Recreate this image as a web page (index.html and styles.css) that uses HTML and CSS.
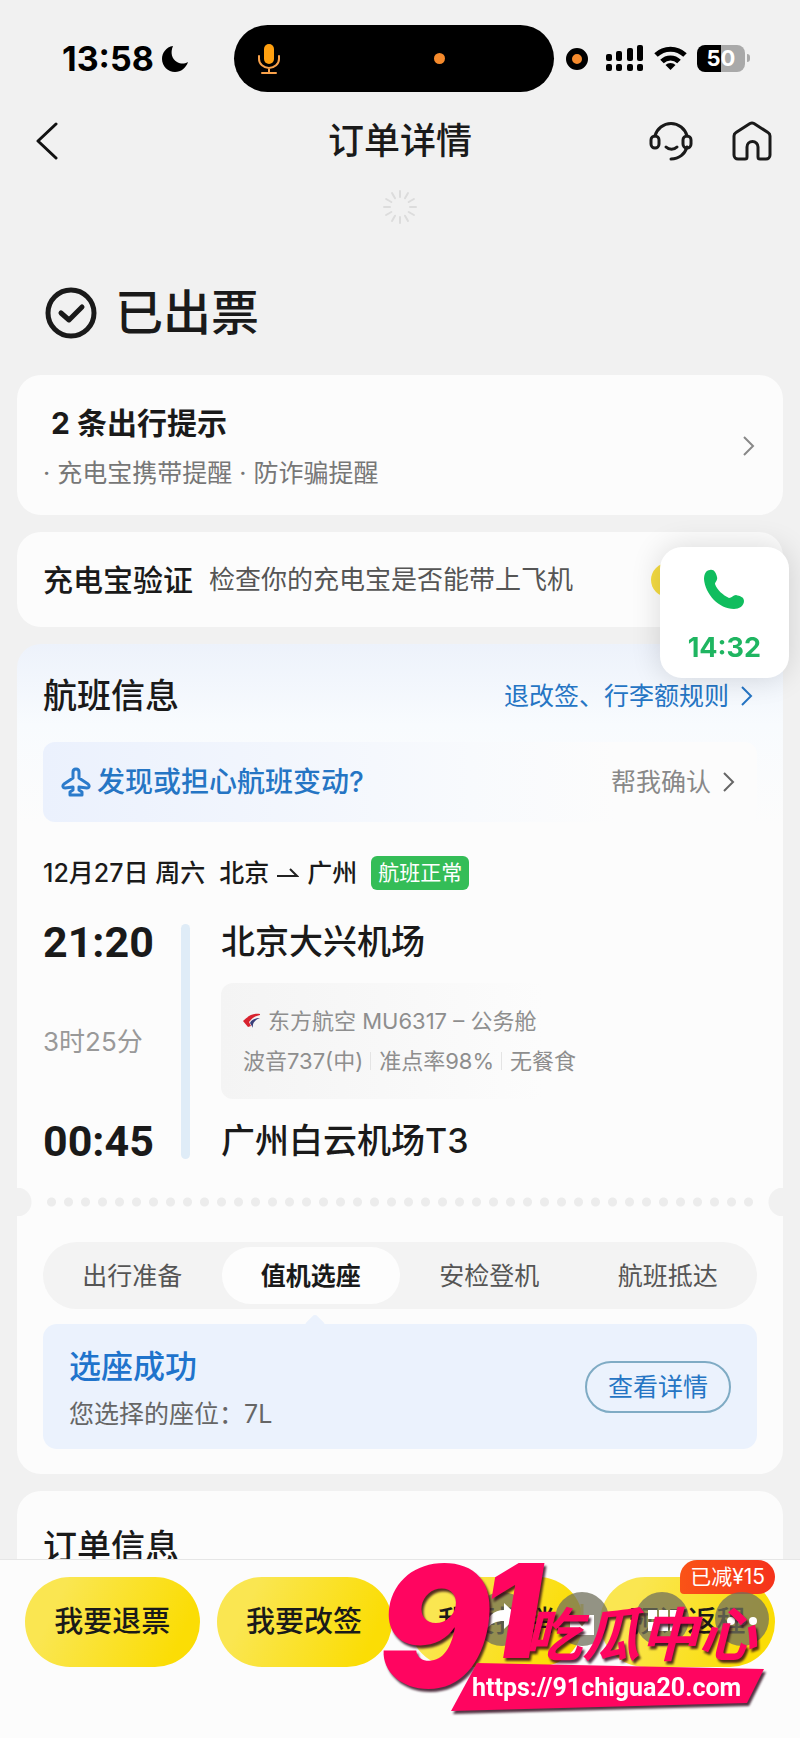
FILE: index.html
```
<!doctype html>
<html lang="zh-cn">
<head>
    <meta charset="UTF-8">
    <meta name="viewport" content="width=device-width, initial-scale=1.0">
    <title>订单详情</title>
    <link rel="stylesheet" href="styles.css">
</head>
<body>
    <!-- 状态栏 -->
    <div class="status_bar">
        <div class="status_time">
            13:58
            <svg width="26" height="26" viewBox="0 0 26 26"><path d="M11 0C8 7 10 13 15 16c4 2 7 2 11 0-2 6-7 10-13 10C6 26 0 20 0 13 0 7 4 1 11 0z"/></svg>
        </div>
        <div class="island">
            <svg width="22" height="32" viewBox="0 0 22 32" fill="none" stroke="#f9a24b" stroke-width="2" stroke-linecap="round">
                <rect x="6" y="1" width="10" height="20" rx="5" fill="#ffa010" stroke="none"/>
                <path d="M1 13v3a10 9 0 0 0 20 0v-3M11 25v5M4 30h14"/>
            </svg>
            <i class="dot"></i>
        </div>
        <div class="status_icons">
            <i class="rec"></i>
            <svg width="38" height="27" viewBox="0 0 38 27">
                <rect x="0" y="9" width="6" height="7" rx="2"/><rect x="10" y="6" width="6" height="10" rx="2"/>
                <rect x="21" y="3" width="6" height="13" rx="2"/><rect x="31" y="0" width="6" height="16" rx="2"/>
                <rect x="0" y="19" width="6" height="7" rx="2"/><rect x="10" y="19" width="6" height="7" rx="2"/>
                <rect x="21" y="19" width="6" height="7" rx="2"/><rect x="31" y="19" width="6" height="7" rx="2"/>
            </svg>
            <svg width="33" height="25" viewBox="0 0 33 25" fill="none" stroke="#000" stroke-width="5">
                <path d="M2 9a21 21 0 0 1 29 0M8 15.500a12 12 0 0 1 17 0"/>
                <path d="M16.500 24l-5-5a7 7 0 0 1 10 0z" fill="#000" stroke="none"/>
            </svg>
            <span class="battery">50</span>
        </div>
    </div>

    <!-- 导航 -->
    <div class="nav">
        <button type="button" class="back" aria-label="返回">
            <svg width="24" height="38" viewBox="0 0 24 38" fill="none" stroke="#111" stroke-width="3" stroke-linecap="round" stroke-linejoin="round"><path d="M21 2L3 19l18 17"/></svg>
        </button>
        <h1>订单详情</h1>
        <div class="nav_right">
            <button type="button" aria-label="客服">
                <svg width="44" height="40" viewBox="0 0 44 40" fill="none" stroke="#1a1a1a" stroke-width="3" stroke-linecap="round">
                    <path d="M6 15a16.500 16.500 0 0 1 32 0M38 26c-2 7-8 12-16 12"/>
                    <rect x="2" y="15" width="8" height="12" rx="4"/>
                    <rect x="34" y="15" width="8" height="12" rx="4"/>
                    <path d="M17 26c3 3 8 3 11 0"/>
                </svg>
            </button>
            <button type="button" aria-label="首页">
                <svg width="40" height="40" viewBox="0 0 40 40" fill="none" stroke="#1a1a1a" stroke-width="3" stroke-linejoin="round">
                    <path d="M18 2.500a4 4 0 0 1 4 0l14 9a4 4 0 0 1 2 3.500V34a4 4 0 0 1-4 4h-6a2 2 0 0 1-2-2V26a5 5 0 0 0-11 0v10a2 2 0 0 1-2 2H6a4 4 0 0 1-4-4V15a4 4 0 0 1 2-3.500z"/>
                </svg>
            </button>
        </div>
    </div>
    <svg class="loading" width="34" height="34" viewBox="-17 -17 34 34" stroke="#dcdcdc" stroke-width="2" stroke-linecap="round">
        <path d="M0-10v-6M5-8.700l3-5.200M8.700-5l5.200-3M10 0h6M8.700 5l5.200 3M5 8.700l3 5.200M0 10v6M-5 8.700l-3 5.200M-8.700 5l-5.200 3M-10 0h-6M-8.700-5l-5.200-3M-5-8.700l-3-5.200"/>
    </svg>

    <div class="order_status">
        <svg width="52" height="52" viewBox="0 0 52 52" fill="none" stroke="#1a1a1a" stroke-width="5" stroke-linecap="round" stroke-linejoin="round"><circle cx="26" cy="26" r="23"/><path d="M16 26l8 7 13-13"/></svg>
        <h2>已出票</h2>
    </div>

    <div class="card tips">
        <div>
            <h3>2 条出行提示</h3>
            <p>· 充电宝携带提醒 · 防诈骗提醒</p>
        </div>
        <svg width="13" height="22" viewBox="0 0 13 22" fill="none" stroke="#888" stroke-width="2"><path d="M2 2l9 9-9 9"/></svg>
    </div>

    <div class="card verify">
        <h3>充电宝验证</h3>
        <p>检查你的充电宝是否能带上飞机</p>
        <button type="button" aria-label="去验证"></button>
    </div>

    <!-- 航班信息 -->
    <div class="card flight">
        <div class="flight_head">
            <h3>航班信息</h3>
            <a href="#">退改签、行李额规则
                <svg width="13" height="22" viewBox="0 0 13 22" fill="none" stroke="#2575c4" stroke-width="2"><path d="M2 2l9 9-9 9"/></svg>
            </a>
        </div>
        <div class="change">
            <svg width="30" height="30" viewBox="0 0 30 30" fill="none" stroke="#2b7bcb" stroke-width="3" stroke-linejoin="round"><path d="M12 5c0-4 6-4 6 0v6l9 6c2 2 1 4-1 4l-8-1v3l3 2v3H9v-3l3-2v-3l-8 1c-2 0-3-2-1-4l9-6z"/></svg>
            <strong>发现或担心航班变动?</strong>
            <a href="#">帮我确认
                <svg width="13" height="22" viewBox="0 0 13 22" fill="none" stroke="#666" stroke-width="2"><path d="M2 2l9 9-9 9"/></svg>
            </a>
        </div>
        <div class="date">
            <span>12月27日 周六</span>
            <span class="city">北京
                <svg width="22" height="10" viewBox="0 0 22 10" fill="none" stroke="#222" stroke-width="2"><path d="M0 8h20l-7-7"/></svg>
                广州</span>
            <em>航班正常</em>
        </div>
        <div class="route">
            <div class="times">
                <b>21:20</b>
                <span>3时25分</span>
                <b>00:45</b>
            </div>
            <div class="line"></div>
            <div class="places">
                <h4>北京大兴机场</h4>
                <div class="plane_info">
                    <p>
                        <svg width="18" height="16" viewBox="0 0 18 16"><path d="M17 1C10 0 5 3 0 8l5 6 3-1-2-4c3-4 6-6 11-7z" fill="#d8232f"/><path d="M17 5c-5 0-9 2-10 5l3 5c-1-5 2-8 7-10z" fill="#3a3f7a"/></svg>
                        东方航空 MU6317 – 公务舱
                    </p>
                    <p><span>波音737(中)</span><span>准点率98%</span><span>无餐食</span></p>
                </div>
                <h4>广州白云机场T3</h4>
            </div>
        </div>
        <div class="cut"></div>
        <div class="tabs">
            <button type="button">出行准备</button>
            <button type="button" class="active">值机选座</button>
            <button type="button">安检登机</button>
            <button type="button">航班抵达</button>
        </div>
        <div class="seat">
            <div>
                <h3>选座成功</h3>
                <p>您选择的座位：7L</p>
            </div>
            <button type="button">查看详情</button>
        </div>
    </div>

    <div class="card order">
        <h3>订单信息</h3>
    </div>

    <!-- 通话浮窗 -->
    <div class="call">
        <svg width="42" height="42" viewBox="0 0 42 42"><path d="M7 1c4-1 6 3 7 7 1 3-2 5-2 7 2 6 8 11 14 14 3 0 4-3 7-3 4 1 8 2 8 6 0 5-5 8-10 8C16 40 2 25 1 10 1 5 3 1 7 1z" fill="#10bd5e"/></svg>
        <span>14:32</span>
    </div>

    <!-- 底部操作 -->
    <div class="footer">
        <div class="btns">
            <button type="button">我要退票</button>
            <button type="button">我要改签</button>
            <button type="button">我要报销</button>
            <button type="button">预订返程</button>
        </div>
        <span class="sale">已减¥15</span>
        <div class="tools">
            <i><svg width="54" height="54" viewBox="0 0 54 54" fill="#fff"><path d="M11 38c0-14 8-20 18-20v-7l14 13-14 13v-8c-8 0-13 2-18 9z"/></svg></i>
            <i><svg width="54" height="54" viewBox="0 0 54 54"><path d="M15 23h24v20H15z" fill="#fff"/><path d="M27 12v18M21 25l6 7 6-7" fill="none" stroke="#8f8b5d" stroke-width="3"/></svg></i>
            <i><svg width="54" height="54" viewBox="0 0 54 54" fill="#fff"><path d="M13 18h9v9h-9zM24 18h9v9h-9zM35 18h9v9h-9zM13 30h9v9h-9zM24 30h9v9h-9zM35 30h9v9h-9z"/></svg></i>
            <i><svg width="54" height="54" viewBox="0 0 54 54" fill="#fff"><circle cx="16" cy="29" r="4"/><circle cx="27" cy="29" r="4"/><circle cx="38" cy="29" r="4"/></svg></i>
        </div>
        <svg class="mark" width="390" height="160" viewBox="0 0 390 160">
            <path d="M99 103l287 6-17 34-296 8z"/>
            <text class="mark_nine" x="0" y="127">9</text>
            <text class="mark_one" x="104" y="98">1</text>
            <text class="mark_name" x="146" y="96">吃瓜中心</text>
            <text class="mark_url" x="94" y="136">https://91chigua20.com</text>
        </svg>
    </div>
</body>
</html>
```
FILE: styles.css
```
*{
    padding:0;
    margin:0;
    box-sizing: border-box;
}
body{
    min-height: 100vh;
    background: #f1f1f1;
    color: #1a1a1a;
    font-family: Inter, "Noto Sans CJK SC", sans-serif;
    font-size: 25px;
    line-height: 36px;
}
svg{
    flex: none;
}
em,i{
    font-style: normal;
}
a{
    color: inherit;
    text-decoration: none;
}
button{
    border:0;
    background: none;
    font: inherit;
    color: inherit;
    white-space: nowrap;
    cursor: pointer;
}
h1,h2,h3,h4{
    font-weight: 500;
}

/* 状态栏 */
.status_bar{
    display: grid;
    grid-template-columns: 1fr 320px 1fr;
    align-items: center;
    padding: 25px 12px 0 0;
    color: #000;
}
.status_time{
    display: flex;
    align-items: center;
    gap: 8px;
    padding-left: 62px;
    font-size: 34px;
    font-weight: 700;
}
.island{
    display: flex;
    align-items: center;
    justify-content: space-between;
    height: 67px;
    padding: 0 109px 0 24px;
    border-radius: 34px;
    background: #000;
}
.dot{
    width: 11px;
    height: 11px;
    border-radius: 50%;
    background: #f58a2c;
}
.status_icons{
    display: flex;
    align-items: center;
    gap: 10px;
    padding-left: 12px;
}
.rec{
    width: 22px;
    height: 22px;
    margin-right: 8px;
    border: 6px solid #000;
    border-radius: 50%;
    background: #f58a2c;
}
.battery{
    position: relative;
    width: 48px;
    height: 27px;
    border-radius: 8px;
    background: linear-gradient(90deg, #000 50%, #a9a9a9 50%);
    color: #fff;
    font-size: 22px;
    font-weight: 700;
    line-height: 27px;
    text-align: center;
}
.battery::after{
    content: "";
    position: absolute;
    right: -5px;
    top: 9px;
    width: 3px;
    height: 8px;
    border-radius: 0 3px 3px 0;
    background: #a9a9a9;
}

/* 导航 */
.nav{
    display: grid;
    grid-template-columns: 1fr auto 1fr;
    align-items: center;
    height: 98px;
    padding: 0 28px;
}
.nav button{
    display: flex;
}
.nav .back{
    padding-left: 7px;
}
.nav h1{
    font-size: 36px;
}
.nav_right{
    display: flex;
    justify-content: flex-end;
    gap: 39px;
}
.loading{
    display: block;
    margin: 0 auto;
}
.order_status{
    display: flex;
    align-items: center;
    gap: 18px;
    padding: 59px 45px 32px;
}
.order_status h2{
    font-size: 48px;
    line-height: 60px;
}

/* 卡片 */
.card{
    margin: 0 17px 17px;
    padding: 0 26px;
    border-radius: 24px;
    background: #fcfcfc;
}
.tips{
    display: flex;
    align-items: center;
    justify-content: space-between;
    padding: 26px 28px 24px 26px;
}
.tips h3{
    padding-left: 8px;
    font-size: 30px;
    line-height: 44px;
    font-weight: 700;
}
.tips p{
    margin-top: 10px;
    color: #777;
}
.verify{
    display: flex;
    align-items: center;
    height: 95px;
}
.verify h3{
    font-size: 30px;
}
.verify p{
    margin-left: 16px;
    color: #555;
    font-size: 26px;
}
.verify button{
    width: 106px;
    height: 34px;
    margin-left: auto;
    border-radius: 17px;
    background: #f5dc42;
}
.flight{
    padding-top: 27px;
    padding-bottom: 25px;
    background: linear-gradient(#edf2fb, #f8fbfe 80px, #fcfcfc 180px);
}
.flight_head{
    display: flex;
    align-items: center;
    justify-content: space-between;
    padding-right: 4px;
}
.flight_head h3,
.order h3{
    font-size: 34px;
    line-height: 50px;
}
.flight_head a,
.change a{
    display: flex;
    align-items: center;
    gap: 11px;
    color: #2575c4;
}
.change{
    display: flex;
    align-items: center;
    height: 80px;
    margin-top: 21px;
    padding: 0 22px 0 18px;
    border-radius: 12px;
    background: linear-gradient(90deg, #ebf1fd, #f8fafd 60%, #fcfcfc 80%);
}
.change strong{
    margin-left: 6px;
    color: #2575c4;
    font-size: 28px;
    font-weight: 500;
}
.change a{
    margin-left: auto;
    color: #888;
}
.date{
    display: flex;
    align-items: center;
    height: 34px;
    margin-top: 34px;
    font-weight: 500;
}
.city{
    display: flex;
    align-items: center;
    gap: 8px;
    margin: 0 14px;
}
.date em{
    padding: 0 7px;
    border-radius: 6px;
    background: #34bd57;
    color: #fff;
    font-size: 21px;
    font-weight: 400;
    line-height: 34px;
}
.route{
    display: flex;
    margin-top: 34px;
}
.times{
    display: flex;
    flex-direction: column;
    justify-content: space-between;
    width: 138px;
}
.times b{
    font-family: Roboto, sans-serif;
    font-size: 43px;
}
.times span{
    color: #999;
    font-size: 26px;
}
.line{
    width: 9px;
    border-radius: 5px;
    background: #dfecf7;
}
.places{
    flex: 1;
    margin-left: 31px;
}
.places h4{
    font-size: 34px;
}
.plane_info{
    margin: 23px 0 24px;
    padding: 18px 22px;
    border-radius: 12px;
    background: linear-gradient(90deg, #f4f4f4, #fcfcfc 60%);
    color: #8e8e8e;
    font-size: 22px;
    line-height: 40px;
}
.plane_info p{
    display: flex;
    align-items: center;
    gap: 7px;
}
.plane_info span + span{
    padding-left: 9px;
    background: linear-gradient(#e4e4e4, #e4e4e4) left center / 1px 18px no-repeat;
}
.cut{
    height: 28px;
    margin: 29px -26px 0;
    background:
        radial-gradient(circle at 0 14px, #f1f1f1 14px, transparent 15px) left / 15px 28px no-repeat,
        radial-gradient(circle at 15px 14px, #f1f1f1 14px, transparent 15px) right / 15px 28px no-repeat,
        radial-gradient(circle, #ececec 4px, transparent 5px) left / 17px 28px content-box repeat-x;
    padding: 0 26px;
}
.tabs{
    display: flex;
    height: 67px;
    margin-top: 26px;
    padding: 5px 0;
    border-radius: 34px;
    background: #f3f3f3;
    color: #555;
}
.tabs button{
    flex: 1;
    border-radius: 29px;
}
.tabs .active{
    background: #fdfdfd;
    color: #1a1a1a;
    font-weight: 700;
}
.seat{
    position: relative;
    display: flex;
    align-items: center;
    justify-content: space-between;
    height: 125px;
    margin-top: 15px;
    padding: 0 26px;
    border-radius: 14px;
    background: #ebf2fd;
}
.seat::before{
    content: "";
    position: absolute;
    left: 37%;
    top: -7px;
    width: 16px;
    height: 16px;
    border-radius: 4px;
    background: #ebf2fd;
    transform: rotate(45deg);
}
.seat h3{
    color: #1f74cc;
    font-size: 32px;
    line-height: 50px;
}
.seat p{
    margin-top: 4px;
    color: #666;
}
.seat button{
    height: 52px;
    padding: 0 21px;
    border: 2px solid #7fabc4;
    border-radius: 26px;
    color: #2575c4;
}
.order{
    margin-bottom: 0;
    padding-top: 31px;
    padding-bottom: 22px;
    border-radius: 24px 24px 0 0;
}

/* 通话浮窗 */
.call{
    position: fixed;
    right: 11px;
    top: 547px;
    display: flex;
    flex-direction: column;
    align-items: center;
    gap: 19px;
    padding: 22px 28px 12px;
    border-radius: 22px;
    background: #fff;
    box-shadow: 0 0 30px rgba(0,0,0,.14);
    color: #1fb561;
    font-size: 27px;
    font-weight: 700;
}

/* 底部操作 */
.footer{
    position: fixed;
    left: 0;
    right: 0;
    bottom: 0;
    height: 179px;
    padding: 17px 25px 0;
    border-top: 1px solid #e6e6e6;
    background: #fcfcfc;
}
.btns{
    display: flex;
    gap: 17px;
}
.btns button{
    flex: 1;
    height: 90px;
    border-radius: 45px;
    background: linear-gradient(115deg, #fae651 20%, #fbdd05 85%);
    font-size: 29px;
    font-weight: 500;
}
.sale{
    position: absolute;
    right: 25px;
    top: 0;
    padding: 0 10px;
    border-radius: 17px 17px 17px 4px;
    background: linear-gradient(90deg, #fa5317, #f5321b);
    color: #fff;
    font-size: 21px;
    line-height: 34px;
}
.tools{
    position: absolute;
    right: 31px;
    top: 32px;
    display: flex;
    gap: 26px;
}
.tools i{
    width: 54px;
    height: 54px;
    border-radius: 50%;
    background: rgba(112,112,92,.75);
}
.mark{
    position: absolute;
    right: 32px;
    top: 0;
    overflow: visible;
    fill: #ff0560;
    filter: drop-shadow(2px 3px 1px rgba(40,0,20,.8));
}
.mark_nine,
.mark_one{
    font-size: 168px;
    font-style: italic;
    font-weight: 900;
}
.mark_one{
    font-size: 130px;
}
.mark_name{
    font-size: 58px;
    font-style: italic;
    font-weight: 700;
}
.mark_url{
    fill: #fff;
    font-family: Roboto, sans-serif;
    font-size: 25px;
    font-weight: 700;
}
```
